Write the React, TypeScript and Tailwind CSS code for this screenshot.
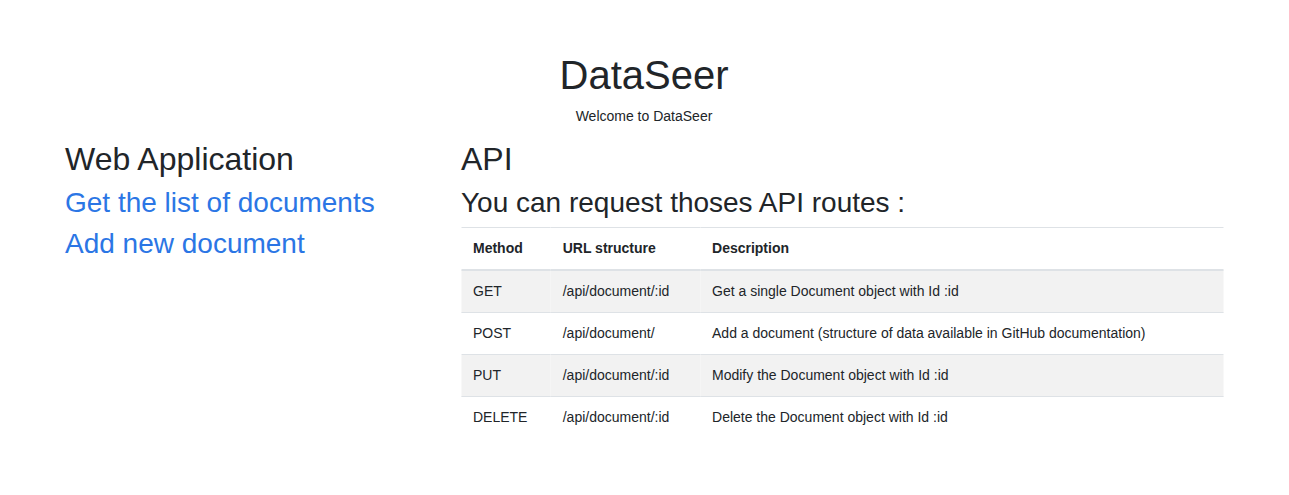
const ROUTES = [
  { method: "GET", url: "/api/document/:id", desc: "Get a single Document object with Id :id" },
  { method: "POST", url: "/api/document/", desc: "Add a document (structure of data available in GitHub documentation)" },
  { method: "PUT", url: "/api/document/:id", desc: "Modify the Document object with Id :id" },
  { method: "DELETE", url: "/api/document/:id", desc: "Delete the Document object with Id :id" },
];

export default function App() {
  return (
    <div
      className="min-h-[495px] bg-white text-[#212529] pt-[51px]"
      style={{ fontFamily: '"Liberation Sans", Arial, sans-serif' }}
    >
      <div className="w-[1188px] mx-auto px-[15px] -translate-x-[0.5px]">
        {/* Header */}
        <header className="text-center">
          <h1 className="text-[40px] leading-[48px] mb-2">DataSeer</h1>
          <p className="text-[14px] leading-[18px] mb-[15px]">Welcome to DataSeer</p>
        </header>

        <div className="grid grid-cols-[366px_762px] gap-x-[30px]">
          {/* Web application links */}
          <section>
            <h2 className="text-[32px] leading-[38.4px] mb-2">Web Application</h2>
            <a href="#" className="block text-[28px] leading-[33.6px] mb-[6.5px] text-[#2b76e5] hover:underline">
              Get the list of documents
            </a>
            <a href="#" className="block text-[28px] leading-[33.6px] text-[#2b76e5] hover:underline">
              Add new document
            </a>
          </section>

          {/* API routes */}
          <section>
            <h2 className="text-[32px] leading-[38.4px] mb-2">API</h2>
            <h3 className="text-[28px] leading-[33.6px] mb-[7px]">You can request thoses API routes :</h3>
            <table className="w-full text-left text-[14px] leading-[17px] border-collapse">
              <thead>
                <tr>
                  <th className="px-3 py-3 font-bold border-t border-b-2 border-[#dee2e6]">Method</th>
                  <th className="px-3 py-3 font-bold border-t border-b-2 border-[#dee2e6]">URL structure</th>
                  <th className="px-3 py-3 font-bold border-t border-b-2 border-[#dee2e6]">Description</th>
                </tr>
              </thead>
              <tbody>
                {ROUTES.map((r, i) => (
                  <tr key={r.method} className={i % 2 === 0 ? "bg-[#f2f2f2]" : ""}>
                    <td className="px-3 py-3 border-t border-[#dee2e6]">{r.method}</td>
                    <td className="px-3 py-3 border-t border-[#dee2e6]">{r.url}</td>
                    <td className="px-3 py-3 border-t border-[#dee2e6]">{r.desc}</td>
                  </tr>
                ))}
              </tbody>
            </table>
          </section>
        </div>
      </div>
    </div>
  );
}
